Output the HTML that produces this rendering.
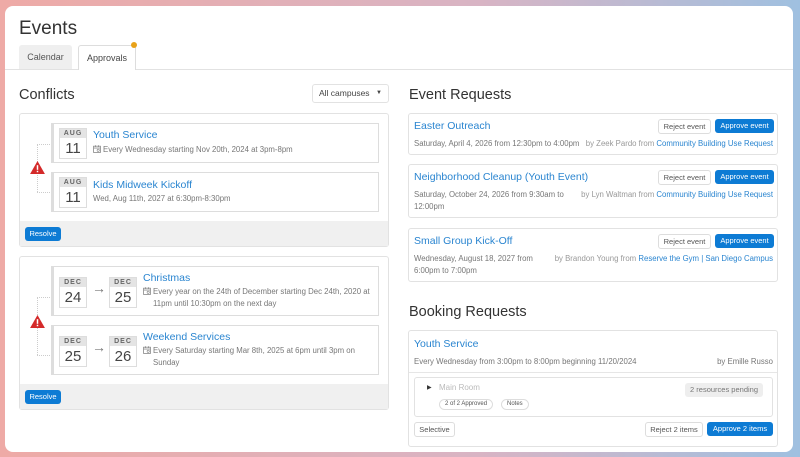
<!DOCTYPE html>
<html><head><style>
*{box-sizing:border-box;margin:0;padding:0}
body{width:800px;height:457px;overflow:hidden;font-family:"Liberation Sans",sans-serif;background:linear-gradient(90deg,#eeaaa6 0%,#d8b4c4 60%,#9fc0e0 100%);position:relative;color:#333}
.win{position:absolute;left:5px;top:6px;width:788px;height:446px;background:#fff;border-radius:8px;overflow:hidden}
.a{position:absolute}
.h{font-size:14.5px;color:#333}
.link{color:#2a85d0}
.box{position:absolute;border:1px solid #e2e2e2;border-radius:3px;background:#fff}
.card{position:absolute;border:1px solid #ddd;border-left:3px solid #ddd;background:#fff}
.date{position:absolute;width:28px;height:31px;border:1px solid #ddd;background:#fff;text-align:center}
.date .m{background:#e4e4e4;font-size:7px;font-weight:bold;letter-spacing:1px;color:#666;height:9px;line-height:9px}
.date .d{font-size:15px;color:#444;line-height:21px}
.t{font-size:10.5px;color:#2a85d0;position:absolute}
.s{font-size:7.8px;color:#777;position:absolute;line-height:12px}
.foot{position:absolute;left:0;right:0;bottom:0;background:#f0f0f0}
.btnb{position:absolute;background:#0d7bd4;color:#fff;border-radius:3px;font-size:7.5px;text-align:center;line-height:14px}
.btnw{position:absolute;background:#fff;border:1px solid #ddd;color:#555;border-radius:3px;font-size:7.5px;text-align:center;line-height:13px}
.warn{position:absolute;width:15px;height:13px}
.vl{position:absolute;border-left:1px dotted #ccc}
.hl{position:absolute;border-top:1px dotted #ccc}
.arr{position:absolute;font-size:14px;color:#777}
.ic{display:inline-block;width:8px;height:8px;vertical-align:-1px;margin-right:2px}
</style></head><body>
<svg width="0" height="0" style="position:absolute"><defs><symbol id="cal" viewBox="0 0 10 10"><rect x="0.7" y="1.5" width="8.6" height="7.8" fill="none" stroke="#888" stroke-width="1"/><line x1="0.7" y1="3.8" x2="9.3" y2="3.8" stroke="#888"/><line x1="3" y1="0.3" x2="3" y2="2.5" stroke="#888"/><line x1="7" y1="0.3" x2="7" y2="2.5" stroke="#888"/><circle cx="6.5" cy="6.6" r="1.4" fill="none" stroke="#888" stroke-width="0.8"/></symbol></defs></svg>
<div class="win">
<div class="a" style="left:14px;top:12px;font-size:19px;color:#333">Events</div>
<div class="a" style="left:14px;top:39px;width:53px;height:24px;background:#efefef;border-radius:3px 3px 0 0;font-size:9px;color:#555;text-align:center;line-height:24px">Calendar</div>
<div class="a" style="left:73px;top:39px;width:58px;height:25px;background:#fff;border:1px solid #ddd;border-bottom:none;border-radius:3px 3px 0 0;font-size:9px;color:#444;text-align:center;line-height:24px">Approvals</div>
<div class="a" style="left:126px;top:36px;width:6px;height:6px;border-radius:50%;background:#e8a21a"></div>
<div class="a" style="left:0;top:63px;width:73px;border-top:1px solid #e2e2e2"></div>
<div class="a" style="left:131px;top:63px;width:657px;border-top:1px solid #e2e2e2"></div>

<div class="a h" style="left:14px;top:81px">Conflicts</div>
<div class="box" style="left:307px;top:78px;width:77px;height:19px;font-size:8.5px;color:#444;line-height:17px;padding-left:6px">All campuses <span style="position:absolute;right:6px;font-size:6px">▼</span></div>

<div class="box" style="left:14px;top:107px;width:370px;height:134px">
 <div class="foot" style="height:25px"></div>
 <div class="btnb" style="left:5px;bottom:5px;width:36px">Resolve</div>
</div>
<div class="vl" style="left:32px;top:138px;height:48px"></div>
<div class="hl" style="left:32px;top:138px;width:15px"></div>
<div class="hl" style="left:32px;top:186px;width:15px"></div>
<svg class="warn" style="left:25px;top:155px" viewBox="0 0 16 14"><path d="M8 0L16 14H0Z" fill="#d42a2a"/><rect x="7.2" y="4.5" width="1.6" height="5" fill="#fff"/><rect x="7.2" y="10.5" width="1.6" height="1.6" fill="#fff"/></svg>
<div class="card" style="left:46px;top:117px;width:328px;height:40px">
 <div class="date" style="left:5px;top:4px"><div class="m">AUG</div><div class="d">11</div></div>
 <div class="t" style="left:39px;top:5px">Youth Service</div>
 <div class="s" style="left:39px;top:20px"><svg class="ic"><use href="#cal"/></svg>Every Wednesday starting Nov 20th, 2024 at 3pm-8pm</div>
</div>
<div class="card" style="left:46px;top:166px;width:328px;height:40px">
 <div class="date" style="left:5px;top:4px"><div class="m">AUG</div><div class="d">11</div></div>
 <div class="t" style="left:39px;top:6px">Kids Midweek Kickoff</div>
 <div class="s" style="left:39px;top:20px">Wed, Aug 11th, 2027 at 6:30pm-8:30pm</div>
</div>

<div class="box" style="left:14px;top:250px;width:370px;height:154px">
 <div class="foot" style="height:25px"></div>
 <div class="btnb" style="left:5px;bottom:5px;width:36px">Resolve</div>
</div>
<div class="vl" style="left:32px;top:291px;height:58px"></div>
<div class="hl" style="left:32px;top:291px;width:15px"></div>
<div class="hl" style="left:32px;top:349px;width:15px"></div>
<svg class="warn" style="left:25px;top:309px" viewBox="0 0 16 14"><path d="M8 0L16 14H0Z" fill="#d42a2a"/><rect x="7.2" y="4.5" width="1.6" height="5" fill="#fff"/><rect x="7.2" y="10.5" width="1.6" height="1.6" fill="#fff"/></svg>
<div class="card" style="left:46px;top:260px;width:328px;height:50px">
 <div class="date" style="left:5px;top:10px"><div class="m">DEC</div><div class="d">24</div></div>
 <div class="arr" style="left:38px;top:13px">→</div>
 <div class="date" style="left:55px;top:10px"><div class="m">DEC</div><div class="d">25</div></div>
 <div class="t" style="left:89px;top:5px">Christmas</div>
 <div class="s" style="left:89px;top:19px;width:235px"><svg class="ic"><use href="#cal"/></svg>Every year on the 24th of December starting Dec 24th, 2020 at<br><span style="padding-left:10px">11pm until 10:30pm on the next day</span></div>
</div>
<div class="card" style="left:46px;top:319px;width:328px;height:50px">
 <div class="date" style="left:5px;top:10px"><div class="m">DEC</div><div class="d">25</div></div>
 <div class="arr" style="left:38px;top:13px">→</div>
 <div class="date" style="left:55px;top:10px"><div class="m">DEC</div><div class="d">26</div></div>
 <div class="t" style="left:89px;top:5px">Weekend Services</div>
 <div class="s" style="left:89px;top:19px;width:235px"><svg class="ic"><use href="#cal"/></svg>Every Saturday starting Mar 8th, 2025 at 6pm until 3pm on<br><span style="padding-left:10px">Sunday</span></div>
</div>

<div class="a h" style="left:404px;top:81px">Event Requests</div>
<div class="box" style="left:403px;top:107px;width:370px;height:42px">
 <div class="t" style="left:5px;top:6px">Easter Outreach</div>
 <div class="btnw" style="left:249px;top:5px;width:53px">Reject event</div>
 <div class="btnb" style="left:306px;top:5px;width:59px">Approve event</div>
 <div class="s" style="left:5px;top:24px">Saturday, April 4, 2026 from 12:30pm to 4:00pm</div>
 <div class="s" style="right:4px;top:24px;color:#999">by Zeek Pardo from <span class="link">Community Building Use Request</span></div>
</div>
<div class="box" style="left:403px;top:158px;width:370px;height:54px">
 <div class="t" style="left:5px;top:6px">Neighborhood Cleanup (Youth Event)</div>
 <div class="btnw" style="left:249px;top:5px;width:53px">Reject event</div>
 <div class="btnb" style="left:306px;top:5px;width:59px">Approve event</div>
 <div class="s" style="left:5px;top:24px">Saturday, October 24, 2026 from 9:30am to<br>12:00pm</div>
 <div class="s" style="right:4px;top:24px;color:#999">by Lyn Waltman from <span class="link">Community Building Use Request</span></div>
</div>
<div class="box" style="left:403px;top:222px;width:370px;height:54px">
 <div class="t" style="left:5px;top:6px">Small Group Kick-Off</div>
 <div class="btnw" style="left:249px;top:5px;width:53px">Reject event</div>
 <div class="btnb" style="left:306px;top:5px;width:59px">Approve event</div>
 <div class="s" style="left:5px;top:24px">Wednesday, August 18, 2027 from<br>6:00pm to 7:00pm</div>
 <div class="s" style="right:4px;top:24px;color:#999">by Brandon Young from <span class="link">Reserve the Gym | San Diego Campus</span></div>
</div>

<div class="a h" style="left:404px;top:298px">Booking Requests</div>
<div class="box" style="left:403px;top:324px;width:370px;height:117px">
 <div class="t" style="left:5px;top:7px">Youth Service</div>
 <div class="s" style="left:5px;top:25px">Every Wednesday from 3:00pm to 8:00pm beginning 11/20/2024</div>
 <div class="s" style="right:4px;top:25px">by Emille Russo</div>
 <div class="a" style="left:0;right:0;top:41px;border-top:1px solid #e6e6e6"></div>
 <div class="box" style="left:5px;top:46px;width:359px;height:40px">
  <div class="a" style="left:12px;top:6px;font-size:6px;color:#333">▶</div>
  <div class="a" style="left:24px;top:5px;font-size:8px;color:#bbb">Main Room</div>
  <div class="a" style="right:9px;top:5px;background:#eee;border-radius:3px;font-size:7.5px;color:#777;padding:0 5px;line-height:14px">2 resources pending</div>
  <div class="a" style="left:24px;top:21px;border:1px solid #ddd;border-radius:7px;font-size:6px;color:#555;padding:0 5px;line-height:9px">2 of 2 Approved</div>
  <div class="a" style="left:86px;top:21px;border:1px solid #ddd;border-radius:7px;font-size:6px;color:#555;padding:0 5px;line-height:9px">Notes</div>
 </div>
 <div class="btnw" style="left:5px;top:91px;width:41px">Selective</div>
 <div class="btnw" style="left:236px;top:91px;width:58px">Reject 2 items</div>
 <div class="btnb" style="left:298px;top:91px;width:66px">Approve 2 items</div>
</div>
</div>
</body></html>
